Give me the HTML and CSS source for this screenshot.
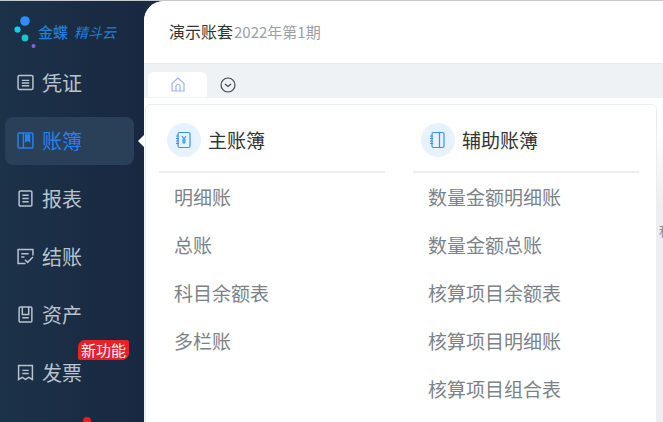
FILE: index.html
```html
<!DOCTYPE html>
<html lang="zh">
<head>
<meta charset="utf-8">
<title>账簿</title>
<link rel="stylesheet" href="styles.css">
</head>
<body>
<div class="app">
  <aside class="side">
    <div class="logo">
      <svg class="logo-mark" viewBox="0 0 24 32" width="24" height="32"><circle cx="12" cy="5" r="4.800" fill="#2f8cff"/><circle cx="4.500" cy="13.500" r="3.100" fill="#13d0f2"/><circle cx="12" cy="22" r="3.400" fill="#14c8c8"/><circle cx="20.500" cy="30" r="2" fill="#8f5ee8"/></svg>
      <span class="logo-text"><b>金蝶</b><i>精斗云</i></span>
    </div>
    <nav class="nav">
      <a class="nav-item"><svg class="ico" viewBox="0 0 16 16"><rect x="1" y="1.500" width="14" height="13" rx="1"/><path d="M4.500 6h7M4.500 8.500h7M4.500 11h7"/></svg>凭证</a>
      <a class="nav-item active"><svg class="ico" viewBox="0 0 16 16"><rect x="1" y="1" width="14" height="14" rx="1"/><path d="M6 1v14"/><path class="fill" d="M7.500 2h5v8l-2.500-1.500L7.500 10z"/></svg>账簿</a>
      <a class="nav-item"><svg class="ico" viewBox="0 0 16 16"><rect x="2" y="1" width="12" height="14" rx="1"/><path d="M5 5h6M5 8h6M5 11h6"/></svg>报表</a>
      <a class="nav-item"><svg class="ico" viewBox="0 0 16 16"><path d="M15 7V1.500H1v13h7"/><path d="M4 5.500h7M4 8.500h3M7.500 11l2.500 2.500L15 8.500"/></svg>结账</a>
      <a class="nav-item"><svg class="ico" viewBox="0 0 16 16"><rect x="2" y="1" width="12" height="14" rx="1"/><path d="M5 1v7h6V1M5 11h6"/></svg>资产</a>
      <a class="nav-item"><svg class="ico" viewBox="0 0 16 16"><path d="M1.500 1.500h13v13l-3.500-2-3 2-3-2-3.500 2z"/><path d="M5 6h6M5 9h6"/></svg>发票<span class="badge">新功能</span></a>
      <a class="nav-item"><svg class="ico" viewBox="0 0 16 16"><rect x="1" y="1.500" width="14" height="13" rx="1"/><path d="M4.500 6h7"/></svg>工具<span class="dot"></span></a>
    </nav>
  </aside>
  <main class="main">
    <header class="top"><span class="book">演示账套</span><span class="period">2022年第1期</span></header>
    <div class="tabs">
      <div class="tab"><svg class="home" viewBox="0 0 14 15"><path d="M1 6.500 7 1l6 5.500V14H1z"/><path d="M5 14V9.500a2 2 0 0 1 4 0V14"/></svg></div>
      <svg class="chev" viewBox="0 0 16 16"><circle cx="8" cy="8" r="7"/><path d="M5 7l3 2.500L11 7"/></svg>
    </div>
    <section class="content">
      <div class="panel">
        <div class="col">
          <div class="col-head"><span class="circle"><svg viewBox="0 0 18 18" width="18" height="18"><rect x="3" y="1.500" width="12" height="15" rx="1.500"/><path d="M1 5h3M1 7.500h3M1 10h3M1 12.500h3M7 5l2 3 2-3M9 8v5M7 9h4M7 11h4"/></svg></span><span class="head-text">主账簿</span></div>
          <ul class="links"><li>明细账</li><li>总账</li><li>科目余额表</li><li>多栏账</li></ul>
        </div>
        <div class="col">
          <div class="col-head"><span class="circle"><svg viewBox="0 0 18 18" width="18" height="18"><rect x="3" y="1.500" width="12" height="15" rx="1.500"/><path d="M1 5h3M1 7.500h3M1 10h3M1 12.500h3M10.500 1.500v15"/></svg></span><span class="head-text">辅助账簿</span></div>
          <ul class="links"><li>数量金额明细账</li><li>数量金额总账</li><li>核算项目余额表</li><li>核算项目明细账</li><li>核算项目组合表</li></ul>
        </div>
      </div>
      <span class="peek">积</span>
    </section>
  </main>
</div>
</body>
</html>
```

FILE: styles.css
```css
* { box-sizing: border-box; }
html, body { margin: 0; height: 100%; overflow: hidden; }
body { font-family: "Noto Sans CJK SC", "Liberation Sans", sans-serif; background: #1a2b44; }
.app { display: flex; width: 663px; height: 422px; overflow: hidden; border-top: 1px solid #c8c8c8; }
.side { flex: 0 0 144px; background: linear-gradient(90deg, #1c3249, #182840); display: flex; flex-direction: column; }
.logo { height: 52px; flex: none; display: flex; padding: 15px 0 0 13px; }
.logo-mark { flex: none; overflow: visible; }
.logo-text { margin-top: 6px; margin-left: 1px; color: #1f7fd8; font-size: 15px; line-height: 20px; white-space: nowrap; }
.logo-text b { font-weight: 500; margin-right: 6px; }
.logo-text i { font-size: 14px; font-weight: 400; }
.nav { display: flex; flex-direction: column; padding: 6px 10px 0 5px; gap: 10px; }
.nav-item { position: relative; height: 48px; display: flex; align-items: center; gap: 8px; padding: 0 0 2px 12px; font-size: 20px; color: #b9c3cd; border-radius: 8px; flex: none; }
.nav-item.active { background: #2a3f58; color: #2681f0; }
.nav-item.active::after { content: ""; position: absolute; right: -10px; top: 18px; border: 6px solid transparent; border-left: 0; border-right: 6px solid #fff; }
.ico { width: 17px; height: 17px; fill: none; stroke: currentColor; stroke-width: 1.400; flex: none; }
.ico .fill { fill: currentColor; stroke: none; }
.badge { position: absolute; left: 73px; top: -9px; background: #e8202a; color: #fff; font-size: 15px; line-height: 20px; padding: 0 3px; border-radius: 7px 2px 7px 2px; }
.dot { position: absolute; left: 78px; top: 10px; width: 8px; height: 8px; border-radius: 50%; background: #f01c24; }
.main { flex: 1; min-width: 0; background: #fff; border-radius: 20px 0 0 0; display: flex; flex-direction: column; overflow: hidden; }
.top { height: 63px; flex: none; padding: 19px 0 0 25px; font-size: 16px; line-height: 22px; background: #fff; border-bottom: 1px solid #e8ebee; }
.book { color: #333; margin-right: 1px; }
.period { color: #99a0a6; font-size: 15px; }
.tabs { height: 34px; flex: none; background: #eff2f5; display: flex; align-items: flex-end; padding-left: 4px; }
.tab { width: 59px; height: 25px; background: #fff; border-radius: 6px 6px 0 0; display: flex; align-items: center; justify-content: center; margin-bottom: 1px; }
.home { width: 14px; height: 15px; fill: none; stroke: #9db4f8; stroke-width: 1.200; }
.chev { width: 16px; height: 16px; margin: 0 0 5px 13px; fill: none; stroke: #3f4650; stroke-width: 1.200; }
.content { position: relative; flex: 1; min-height: 0; overflow: hidden; background: linear-gradient(180deg, #fff 30px, #eceeef 110px); padding: 6px 0 0 1px; }
.content::before { content: ""; position: absolute; left: 0; top: 0; right: 0; height: 6px; background: #fff; }
.panel { position: relative; width: 512px; height: 340px; background: #fff; border: 1px solid #e9eef0; border-radius: 5px; display: flex; padding: 0 0 0 13px; gap: 28px; }
.col { width: 226px; flex: none; }
.col-head { height: 68px; display: flex; align-items: center; gap: 8px; padding: 4px 0 0 8px; font-size: 19px; color: #333; border-bottom: 2px solid #eaeef0; }
.head-text { margin: -2px 0 0 -1px; }
.circle { width: 34px; height: 34px; border-radius: 50%; background: #e7f2ff; display: flex; align-items: center; justify-content: center; flex: none; }
.circle svg { fill: none; stroke: #3d8ef7; stroke-width: 1.200; }
.links { list-style: none; margin: 0; padding: 0 0 0 15px; font-size: 19px; color: #7c8287; }
.links li { height: 48px; line-height: 48px; white-space: nowrap; }
.peek { position: absolute; left: 515px; top: 125px; font-size: 13px; line-height: 16px; color: #8a8a8a; }
```
